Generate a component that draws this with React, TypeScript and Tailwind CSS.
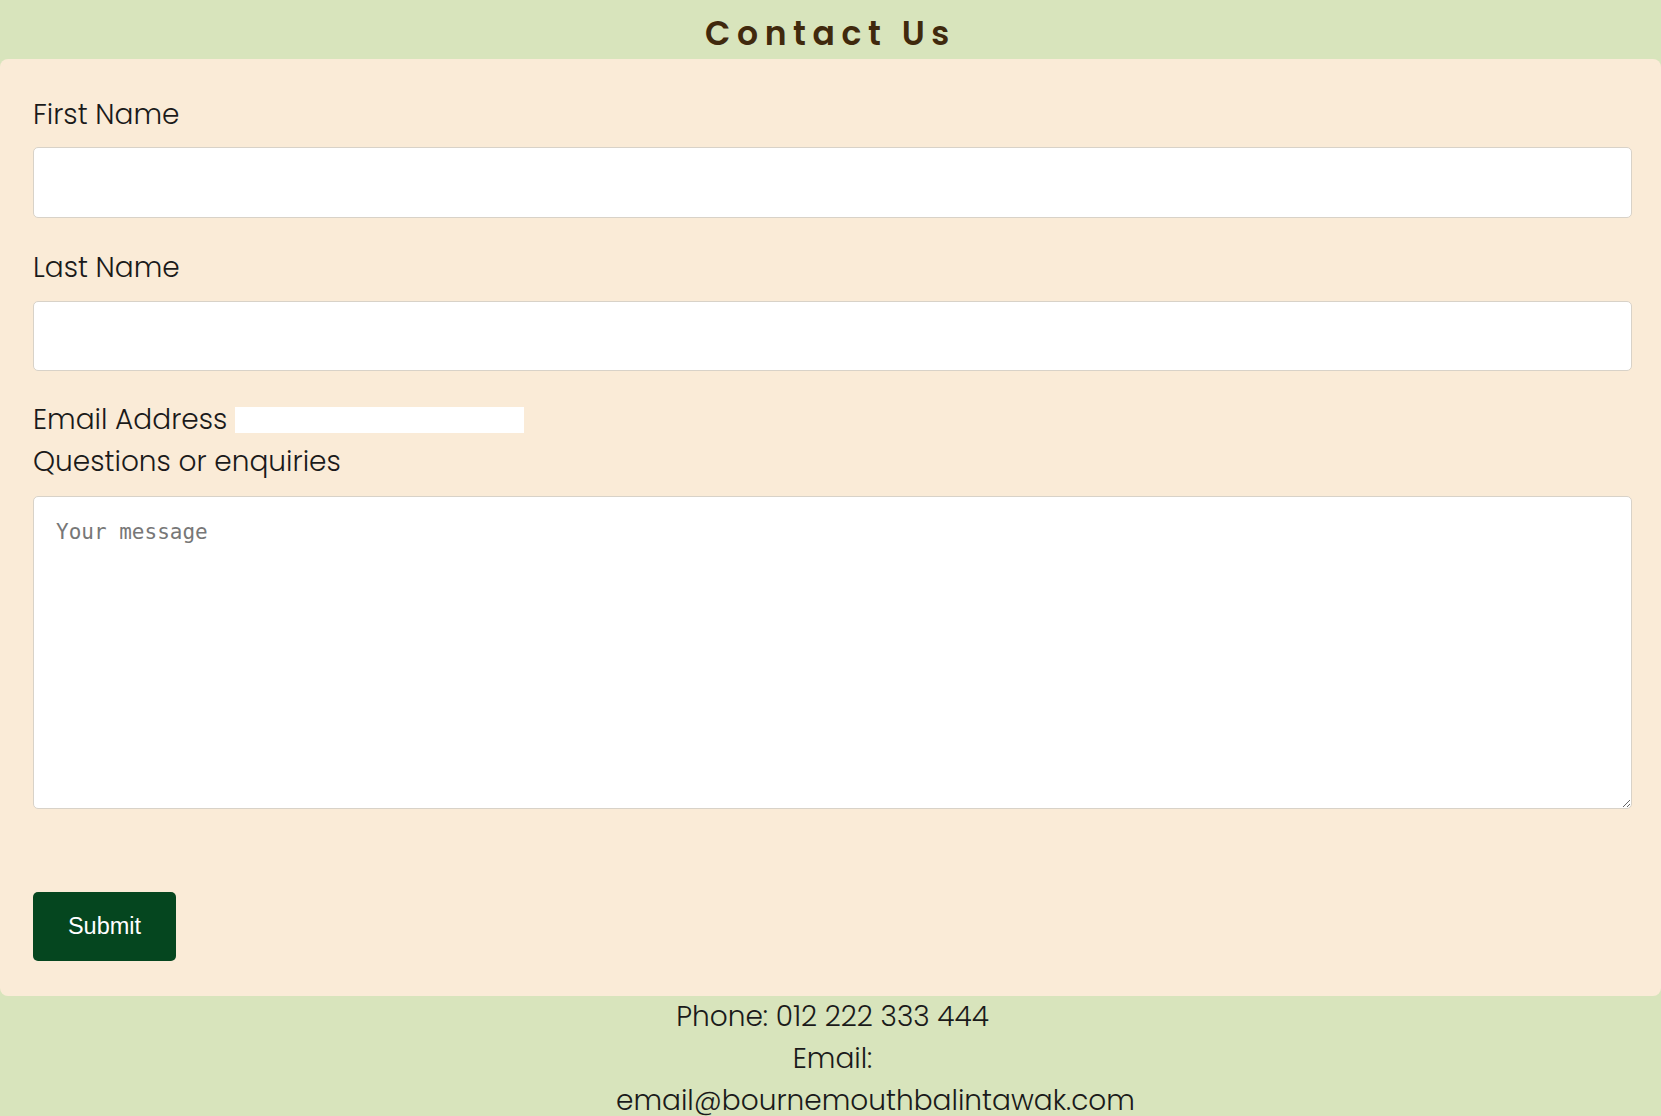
import React from 'react';

const labelCls = "block h-[42px] leading-[42px] text-[28px] font-light text-[#1a1a1a]";
const inputCls = "block w-full bg-white border border-[#d8d2c8] rounded-[5px] outline-none";

export default function App() {
  return (
    <div className="min-h-[1116px] bg-[#d8e4bc] font-['Poppins','Lato','Noto_Sans',sans-serif]">
      <header className="h-[59px] flex items-center justify-center">
        <h1 className="text-[33px] font-semibold tracking-[0.2em] text-[#40290d] leading-none pt-[8px]">
          Contact Us
        </h1>
      </header>

      <form className="bg-[#faebd7] rounded-[8px] pl-[33px] pr-[29px] pt-[35px] pb-[35px]">
        <label className={labelCls}>First Name</label>
        <input type="text" className={inputCls + " h-[71px] mt-[11px]"} />

        <label className={labelCls + " mt-[29px]"}>Last Name</label>
        <input type="text" className={inputCls + " h-[70px] mt-[12px]"} />

        <div className="mt-[28px] flex items-center h-[42px]">
          <span className="text-[28px] font-light text-[#1a1a1a] leading-[42px]">Email Address</span>
          <input type="email" className="ml-[8px] w-[289px] h-[26px] bg-white outline-none" />
        </div>
        <label className={labelCls}>Questions or enquiries</label>

        <textarea
          placeholder="Your message"
          className={inputCls + " h-[313px] mt-[13px] px-[22px] pt-[22px] pb-[18px] font-['DejaVu_Sans_Mono',monospace] text-[21px] leading-[26px] placeholder:text-[#777]"}
        />

        <button
          type="button"
          className="mt-[83px] w-[143px] h-[69px] bg-[#05461f] rounded-[5px] text-white text-[23.5px] font-['Liberation_Sans',Arial,sans-serif]"
        >
          Submit
        </button>
      </form>

      <footer className="w-[437px] mx-auto pl-[4px] text-center text-[28px] font-light leading-[42px] text-[#1a1a1a]">
        <p>Phone: 012 222 333 444</p>
        <p>Email: email@bournemouthbalintawak.com</p>
      </footer>
    </div>
  );
}
